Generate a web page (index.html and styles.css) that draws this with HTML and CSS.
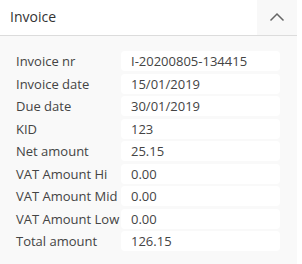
FILE: index.html
```html
<!DOCTYPE html>
<html lang="en">
<head>
  <meta charset="UTF-8">
  <title>Invoice</title>
  <link rel="stylesheet" href="styles.css">
</head>
<body>
  <div class="panel">
    <div class="panel-head">
      <span class="panel-title">Invoice</span>
      <button class="toggle" aria-label="Collapse">
        <svg width="16" height="10" viewBox="0 0 16 10"><path d="M1.5 8.5 L8 2 L14.5 8.5" fill="none" stroke="#666" stroke-width="1.5"/></svg>
      </button>
    </div>
    <div class="panel-body">
      <div class="fields">
        <label>Invoice nr</label><div class="value">I-20200805-134415</div>
        <label>Invoice date</label><div class="value">15/01/2019</div>
        <label>Due date</label><div class="value">30/01/2019</div>
        <label>KID</label><div class="value">123</div>
        <label>Net amount</label><div class="value">25.15</div>
        <label>VAT Amount Hi</label><div class="value">0.00</div>
        <label>VAT Amount Mid</label><div class="value">0.00</div>
        <label>VAT Amount Low</label><div class="value">0.00</div>
        <label>Total amount</label><div class="value">126.15</div>
      </div>
    </div>
  </div>
</body>
</html>
```

FILE: styles.css
```css
* {
  box-sizing: border-box;
}

body {
  font-family: 'Open Sans', sans-serif;
  background: #fff;
  margin: 0;
  color: #444;
}

.panel {
  width: 297px;
  height: 264px;
  background: #f9f9f9;
}

.panel-head {
  display: flex;
  align-items: stretch;
  height: 36px;
  background: #fff;
  border-bottom: 1px solid #dcdcdc;
}

.panel-title {
  flex: 1;
  padding-left: 10px;
  font-size: 14px;
  line-height: 34px;
  color: #333;
}

.toggle {
  width: 40px;
  border: none;
  background: #f8f8f8;
  padding: 0 0 2px;
  display: flex;
  align-items: center;
  justify-content: center;
}

.panel-body {
  padding: 15px 17px 0 16px;
}

.fields {
  display: grid;
  grid-template-columns: 105px 159px;
  grid-auto-rows: 20px;
  row-gap: 2.5px;
  font-size: 13px;
}

.fields label {
  line-height: 20px;
  white-space: nowrap;
}

.value {
  background: #fff;
  border-radius: 4px;
  padding-left: 10px;
  line-height: 20px;
}
```
